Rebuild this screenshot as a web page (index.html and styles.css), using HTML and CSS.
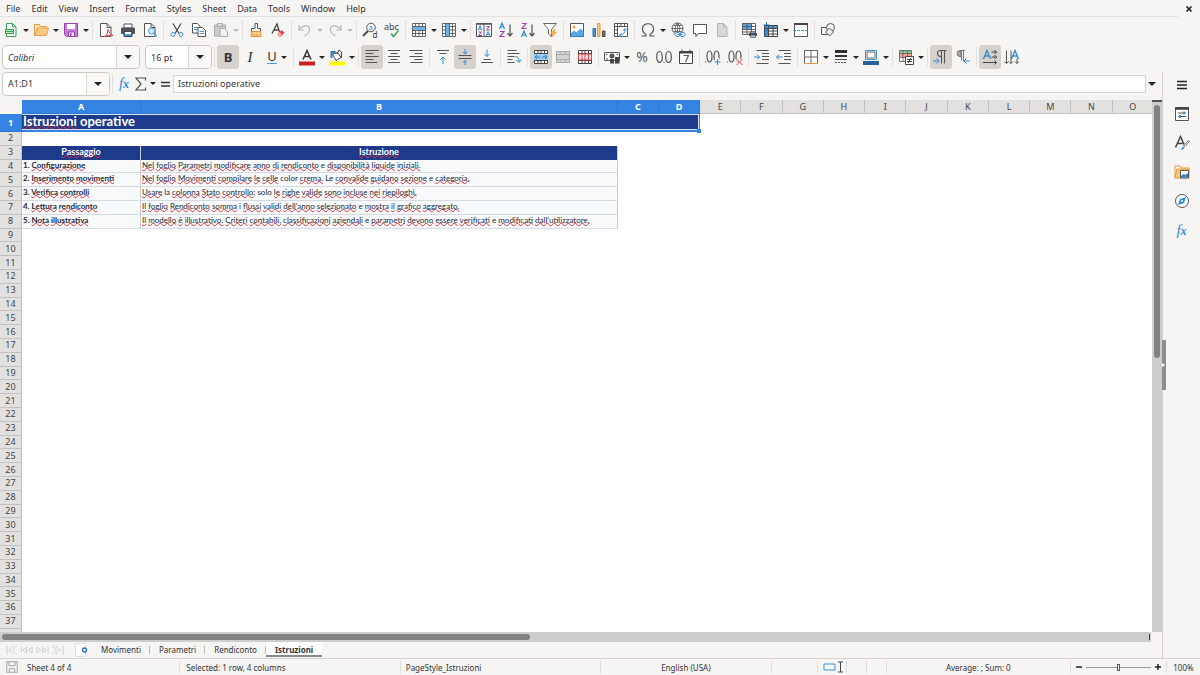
FILE: index.html
```html
<!DOCTYPE html>
<html lang="it">
<head>
<meta charset="utf-8">
<title>Istruzioni operative</title>
<link rel="stylesheet" href="styles.css">
</head>
<body>
<div class="app">
<nav class="menubar">
<div class="menus"><button>File</button><button>Edit</button><button>View</button><button>Insert</button><button>Format</button><button>Styles</button><button>Sheet</button><button>Data</button><button>Tools</button><button>Window</button><button>Help</button></div>
<button class="close" aria-label="Close document"><svg class="i8" viewBox="0 0 8 8"><path d="M1.500 1.500l5 5M6.500 1.500l-5 5" stroke="#222" stroke-width="1.700"/></svg></button>
</nav>

<div class="toolbar standard">
<button aria-label="New"><svg viewBox="0 0 16 16"><path d="M3.500 1.500h6l3.500 3.500v9.500h-9.500z" fill="#fff" stroke="#3d9c5c"/><path d="M9.500 1.500v3.500h3.500" stroke="#3d9c5c"/><path d="M2 7h9v5h-9z" fill="#3aa655"/><path d="M3 8.500h7M3 10.500h7" stroke="#bfe5c8"/></svg><i></i></button>
<button aria-label="Open"><svg viewBox="0 0 16 16"><path d="M1.500 13.500v-11h5l1 2h6v2" stroke="#e09a4a" fill="#fbe3bd"/><path d="M1.500 13.500l3-7.500h11l-2 7.500z" fill="#f9c97f" stroke="#e8a04c"/></svg><i></i></button>
<button aria-label="Save"><svg viewBox="0 0 16 16"><path d="M1.500 1.500h13v13h-11l-2-2z" fill="#c77fd6" stroke="#9a3fae"/><path d="M4 2h8v5h-8z" fill="#fff"/><path d="M5.500 10h6v4.500h-6z" fill="#fff" stroke="#9a3fae"/><path d="M7 11h1.500v3h-1.500z" fill="#9a3fae"/></svg><i></i></button>
<span class="sep"></span>
<button aria-label="Export as PDF"><svg viewBox="0 0 16 16"><path d="M2.500 1.500h6.500l4 4v9h-10.500z" fill="#fff" stroke="#555"/><path d="M9 1.500v4h4" stroke="#555"/><path d="M6.500 14.500q4-3 3.500-7q1 5 5 6q-5-1-8.500 1z" fill="#fff" stroke="#e0404a"/></svg></button>
<button aria-label="Print"><svg viewBox="0 0 16 16"><path d="M4 2h8v4h-8z" fill="#fff" stroke="#555"/><rect x="1" y="5.500" width="14" height="6.500" rx="1" fill="#4d5359"/><path d="M4 9.500h8v5h-8z" fill="#4a9ae0" stroke="#444"/><path d="M5 10h6v2h-6z" fill="#fff"/></svg></button>
<button aria-label="Print preview"><svg viewBox="0 0 16 16"><path d="M2.500 1.500h6.500l4 4v9h-10.500z" fill="#fff" stroke="#555"/><path d="M9 1.500v4h4" stroke="#555"/><circle cx="9.500" cy="9" r="3" fill="#d9ecfb" stroke="#4a9ad8"/><path d="M11.700 11.200l3 3.300" stroke="#4a9ad8" stroke-width="1.400"/></svg></button>
<span class="sep"></span>
<button aria-label="Cut"><svg viewBox="0 0 16 16"><path d="M4 1.500l6 10M12 1.500l-6 10" stroke="#444" stroke-width="1.200"/><circle cx="4" cy="12.500" r="2" stroke="#3d92d6"/><circle cx="12" cy="12.500" r="2" stroke="#3d92d6"/></svg></button>
<button aria-label="Copy"><svg viewBox="0 0 16 16"><path d="M1.500 1.500h5l2.500 2.500v7h-7.500z" fill="#fff" stroke="#555"/><path d="M3 5.500h4M3 7.500h4" stroke="#4a9ad8"/><path d="M7 5.500h4.500l3 3v6h-7.500z" fill="#fff" stroke="#555"/><path d="M8.500 9.500h4.500M8.500 11.500h4.500" stroke="#4a9ad8"/></svg></button>
<button aria-label="Paste" disabled><svg viewBox="0 0 16 16"><path d="M1.500 3h11v11h-11z" fill="#ccc" stroke="#aaa"/><path d="M4.500 1.500h5v3h-5z" fill="#ddd" stroke="#aaa"/><path d="M7 6.500h4.500l3 3v5h-7.500z" fill="#f2f2f2" stroke="#aaa"/></svg><i></i></button>
<span class="sep"></span>
<button aria-label="Clone formatting"><svg viewBox="0 0 16 16"><path d="M7 6.500v-5h2.500v5h3v3h-9v-3z" fill="#fff" stroke="#555"/><path d="M3.500 9.500h9l.5 5h-10z" fill="#f9c97f" stroke="#e8943a"/><path d="M6 14v-2M9 14v-2" stroke="#e8943a"/></svg></button>
<button aria-label="Clear formatting"><svg viewBox="0 0 16 16"><path d="M2 11.500l5-9.500 2.500 8M4 8h5" stroke="#444" stroke-width="1.300"/><path d="M7.500 12l4-4 3 2.500-3.500 4h-2z" fill="#e0404a"/><path d="M7.500 12l2-2 2.500 3-1.500 1.500h-1.500z" fill="#f5a5aa"/></svg></button>
<span class="sep"></span>
<button aria-label="Undo" disabled><svg viewBox="0 0 16 16"><path d="M2 3v5h5M2.500 7.500c4-6 11-4 10 1q-.5 3-5 5.500" stroke="#b5b5b5" stroke-width="1.200"/></svg><i></i></button>
<button aria-label="Redo" disabled><svg viewBox="0 0 16 16"><path d="M14 3v5h-5M13.500 7.500c-4-6-11-4-10 1q.5 3 5 5.500" stroke="#b5b5b5" stroke-width="1.200"/></svg><i></i></button>
<span class="sep"></span>
<button aria-label="Find and replace"><svg viewBox="0 0 16 16"><circle cx="9" cy="5.500" r="4.300" fill="#fff" stroke="#555"/><path d="M6 9l-5 5" stroke="#444" stroke-width="1.800"/><text x="6.800" y="8" font-size="7" fill="#2f8ad4">a</text><text x="10.500" y="15.500" font-size="8" fill="#333">d</text></svg></button>
<button aria-label="Spelling"><svg viewBox="0 0 16 16"><text x="0" y="7.500" font-size="9" fill="#444">abc</text><path d="M7 11.500l2.500 3 5-6" stroke="#3aa655" stroke-width="1.500"/></svg></button>
<span class="sep"></span>
<button aria-label="Row"><svg viewBox="0 0 16 16"><path d="M1.500 1.500h13v13h-13z" fill="#fff"/><path d="M1.500 4.500h13v4h-13z" fill="#6bb3ec"/><path d="M1.500 1.500h13v13h-13zM1.500 4.500h13M1.500 8.500h13M1.500 11.500h13M4.500 1.500v3M4.500 8.500v6M8 1.500v3M8 8.500v6M11.500 1.500v3M11.500 8.500v6" stroke="#555" stroke-width=".9"/></svg><i></i></button>
<button aria-label="Column"><svg viewBox="0 0 16 16"><path d="M1.500 1.500h13v13h-13z" fill="#fff"/><path d="M4.500 1.500h4v13h-4z" fill="#6bb3ec"/><path d="M1.500 1.500h13v13h-13zM4.500 1.500v13M8.500 1.500v13M11.500 1.500v13M1.500 4.500h3M8.500 4.500h6M1.500 8h3M8.500 8h6M1.500 11.500h3M8.500 11.500h6" stroke="#555" stroke-width=".9"/></svg><i></i></button>
<span class="sep"></span>
<button aria-label="Sort"><svg viewBox="0 0 16 16"><path d="M.5 1.500h15v13h-15zM8 1.500v13" fill="#fff" stroke="#555"/><path d="M.5 2h15" stroke="#555" stroke-width="1.500"/><path d="M2 8.500l2-5 2 5M3 7h2M10 14l2-4.500 2 4.500M11 12.500h2" stroke="#2f8ad4"/><path d="M2.500 10h3l-3 3.500h3.500M10.500 4.500h3l-3 3.500h3.500" stroke="#9a3fae"/></svg></button>
<button aria-label="Sort ascending"><svg viewBox="0 0 16 16"><path d="M1.500 7l2.500-6 2.500 6M2.500 5h3" stroke="#2f8ad4" stroke-width="1.200"/><path d="M2 9.500h4l-4 5h4.500" stroke="#9a3fae" stroke-width="1.200"/><path d="M12 2.500v11.500M9.500 11l2.500 3 2.500-3" stroke="#555" stroke-width="1.200"/></svg></button>
<button aria-label="Sort descending"><svg viewBox="0 0 16 16"><path d="M1.500 15l2.500-6 2.500 6M2.500 13h3" stroke="#2f8ad4" stroke-width="1.200"/><path d="M2 1.500h4l-4 5h4.500" stroke="#9a3fae" stroke-width="1.200"/><path d="M12 2.500v11.500M9.500 11l2.500 3 2.500-3" stroke="#555" stroke-width="1.200"/></svg></button>
<button aria-label="AutoFilter"><svg viewBox="0 0 16 16"><path d="M1.500 1.500h13l-5 6v7l-3-2.500v-4.500z" fill="#fff" stroke="#666"/><path d="M12 7.500l-3.500 4h2.500l-1 3.500 4.500-5h-2.500l1-2.500z" fill="#f9b64f" stroke="#e8943a" stroke-width=".6"/></svg></button>
<span class="sep"></span>
<button aria-label="Insert image"><svg viewBox="0 0 16 16"><path d="M1.500 1.500h13v13h-13z" fill="#fff" stroke="#555"/><circle cx="5" cy="5" r="1.500" fill="#f6a13a"/><path d="M2 12l3-3 2.500 2 4-4 3 3v4.500h-12.500z" fill="#5aa9e6" stroke="#2f7fc4" stroke-width=".7"/></svg></button>
<button aria-label="Insert chart"><svg viewBox="0 0 16 16"><path d="M2 6.500h2.500v8h-2.500z" fill="#4a9ae0" stroke="#2a6fb0"/><path d="M6.500 1.500h2.500v13h-2.500z" fill="#f9c97f" stroke="#e8943a"/><path d="M11.500 9h2.500v5.500h-2.500z" fill="#777" stroke="#444"/></svg></button>
<button aria-label="Insert pivot table"><svg viewBox="0 0 16 16"><path d="M1.500 1.500h13v13h-13zM4.500 1.500v13M1.500 4.500h13M8 1.500v3M11.500 1.500v3M1.500 8h3M1.500 11.500h3" fill="#fff" stroke="#555"/><path d="M7 13q5 0 5-6M10 8.500l2-2 2 2M8.500 11l-2 2 2 2" stroke="#2f8ad4"/></svg></button>
<span class="sep"></span>
<button aria-label="Special character"><svg viewBox="0 0 16 16"><path d="M1.500 14h4.500v-1.500q-3.500-2-3.500-5.500c0-7 11-7 11 0q0 3.500-3.500 5.500v1.500h4.500" stroke="#555" stroke-width="1.200"/></svg><i></i></button>
<button aria-label="Insert hyperlink"><svg viewBox="0 0 16 16"><circle cx="7.500" cy="6.500" r="5.500" stroke="#555"/><path d="M2 6.500h11M7.500 1v10M3.500 3.500h8M3.500 9.500h8M7.500 1q-5 5.500 0 11M7.500 1q5 5.500 0 11" stroke="#555" stroke-width=".8"/><rect x="5" y="10.500" width="5" height="4" rx="2" fill="#fff" stroke="#3d92d6"/><rect x="10" y="10.500" width="5" height="4" rx="2" fill="#fff" stroke="#3d92d6"/><path d="M7.500 12.500h5" stroke="#3d92d6"/></svg></button>
<button aria-label="Insert comment"><svg viewBox="0 0 16 16"><path d="M1.500 2.500h13v9h-8l-2.500 3v-3h-2.500z" fill="#fff" stroke="#555"/></svg></button>
<button aria-label="Headers and footers" disabled><svg viewBox="0 0 16 16"><path d="M3.500 1.500h6l3.500 3.500v9.500h-9.500z" fill="#d8d8d8" stroke="#b5b5b5"/><path d="M9.500 1.500v3.500h3.500" stroke="#b5b5b5"/></svg></button>
<span class="sep"></span>
<button aria-label="Define print area"><svg viewBox="0 0 16 16"><path d="M1.500 1.500h13v11h-13z" fill="#fff"/><path d="M1.500 1.500h9v6h-9z" fill="#5aa9e6"/><path d="M1.500 1.500h13v11h-13zM1.500 4.500h13M1.500 7.500h13M1.500 10h13M6 1.500v11M10.500 1.500v11" stroke="#555" stroke-width=".9"/><path d="M8 11h8v3h-8z" fill="#4d5359"/><path d="M9.500 9.500h5v1.500h-5zM9.500 13h5v2.500h-5z" fill="#9dcaf0" stroke="#444" stroke-width=".6"/></svg></button>
<button aria-label="Freeze rows and columns"><svg viewBox="0 0 16 16"><path d="M1.500 3.500h13v11h-13z" fill="#fff"/><path d="M1.500 3.500h13v3h-13zM1.500 3.500h4v11h-4z" fill="#4a9ae0"/><path d="M1.500 3.500h13v11h-13zM5.500 3.500v11M10 3.500v11M1.500 6.500h13M5.500 9h9M5.500 12h9" stroke="#444"/><path d="M3.500 0v5M.5 3h6M1.500 10l4-3M1.500 14l4-4" stroke="#1c67ae" stroke-width=".9"/></svg><i></i></button>
<button aria-label="Split window"><svg viewBox="0 0 16 16"><path d="M1.500 1.500h13v13h-13z" fill="#fff" stroke="#555"/><path d="M1 2h14" stroke="#444" stroke-width="2"/><path d="M0 8.500h16" stroke="#3d92d6" stroke-dasharray="3 1"/></svg></button>
<span class="sep"></span>
<button aria-label="Show draw functions"><svg viewBox="0 0 16 16"><path d="M1.500 5.500h7v7h-7z" stroke="#555" fill="#f6f5f4"/><circle cx="10.500" cy="5.500" r="4" stroke="#555" fill="#f6f5f4"/><path d="M9.500 6l4 4-4 4-4-4z" stroke="#555" fill="#f6f5f4"/></svg></button>
</div>

<div class="toolbar formatting">
<div class="combo fontname"><input value="Calibri" aria-label="Font name"><button aria-label="Font list"><i></i></button></div>
<div class="combo fontsize"><input value="16 pt" aria-label="Font size"><button aria-label="Size list"><i></i></button></div>
<span class="sep"></span>
<button class="on glyph bold" aria-label="Bold">B</button>
<button class="glyph italic" aria-label="Italic">I</button>
<button class="glyph under" aria-label="Underline"><span>U</span><i></i></button>
<span class="sep"></span>
<button aria-label="Font color"><svg viewBox="0 0 16 16"><path d="M4 10.500l4-9 4 9M5.500 7.500h5" stroke="#333" stroke-width="1.500"/><path d="M0 12.500h16v4h-16z" fill="#c9211e"/></svg><i></i></button>
<button aria-label="Background color"><svg viewBox="0 0 16 16"><path d="M3.500 5l5-1.500 3.500 5-5 3z" fill="#fff" stroke="#444"/><path d="M2.500 9v-6h4" stroke="#2f7fc4" stroke-width="2"/><path d="M8 5l2-4 2.500 2v6" stroke="#444"/><path d="M0 12.500h16v4h-16z" fill="#ff0"/></svg><i></i></button>
<span class="sep"></span>
<button class="on" aria-label="Align left"><svg viewBox="0 0 16 16"><path d="M1.500 1.500h13M1.500 4.500h8M1.500 7.500h13M1.500 10.500h8M1.500 13.500h12" stroke="#555" stroke-width="1.100"/></svg></button>
<button aria-label="Center horizontally"><svg viewBox="0 0 16 16"><path d="M2 1.500h12M4.500 4.500h7M2 7.500h12M4.500 10.500h7M2 13.500h12" stroke="#555" stroke-width="1.100"/></svg></button>
<button aria-label="Align right"><svg viewBox="0 0 16 16"><path d="M1.500 1.500h13M6.500 4.500h8M1.500 7.500h13M6.500 10.500h8M2.500 13.500h12" stroke="#555" stroke-width="1.100"/></svg></button>
<span class="sep"></span>
<button aria-label="Align top"><svg viewBox="0 0 16 16"><path d="M2 1.500h12M4.500 4.500h7" stroke="#555"/><path d="M8 15v-7M5.500 10.500l2.500-2.500 2.500 2.500" stroke="#2f8ad4"/></svg></button>
<button class="on" aria-label="Center vertically"><svg viewBox="0 0 16 16"><path d="M1.500 6.500h13M1.500 9.500h13" stroke="#555"/><path d="M8 0v5M6 3l2 2 2-2M8 16v-4.500M6 13.500l2-2 2 2" stroke="#2f8ad4"/></svg></button>
<button aria-label="Align bottom"><svg viewBox="0 0 16 16"><path d="M4.500 10.500h7M2 13.500h12" stroke="#555"/><path d="M8 .5v7M5.500 5l2.500 2.500 2.500-2.500" stroke="#2f8ad4"/></svg></button>
<span class="sep"></span>
<button aria-label="Wrap text"><svg viewBox="0 0 16 16"><path d="M1.500 1.500h9M1.500 4.500h12M1.500 7.500h7M1.500 10.500h5M1.500 13.500h7" stroke="#555"/><path d="M9 7.500q4 0 4 5M10.500 11l2.500 2.500 2-3" stroke="#2f8ad4"/></svg></button>
<span class="sep"></span>
<button class="on" aria-label="Merge and center cells"><svg viewBox="0 0 16 16"><path d="M1.500 1.500h13v13h-13z" fill="#fff"/><path d="M1.500 1.500h13v13h-13zM1.500 4.500h13M1.500 11.500h13M5 1.500v3M8 1.500v3M11.500 1.500v3M5 11.500v3M8 11.500v3M11.500 11.500v3" stroke="#444"/><path d="M1 5h14v6h-14z" fill="#9dcaf0"/><path d="M2 8h5M9 8h5M4 6l-2 2 2 2M12 6l2 2-2 2" stroke="#2f7fc4"/></svg></button>
<button aria-label="Merge cells" disabled><svg viewBox="0 0 16 16"><path d="M1.500 2.500h13v11h-13zM1.500 5.500h13M1.500 10.500h13M6 2.500v3M10.500 2.500v3M6 10.500v3M10.500 10.500v3" fill="#d5d5d5" stroke="#aaa"/></svg></button>
<button aria-label="Unmerge cells"><svg viewBox="0 0 16 16"><path d="M1.500 1.500h13v13h-13zM1.500 4.500h13M1.500 11.500h13M5 1.500v3M8 1.500v3M11.500 1.500v3M5 11.500v3M8 11.500v3M11.500 11.500v3" fill="#fff" stroke="#444"/><path d="M1.500 5h13v6h-13zM5 5v6M8 5v6M11.500 5v6" fill="#fbe9e9" stroke="#d8404a"/></svg></button>
<span class="sep"></span>
<button aria-label="Format as currency"><svg viewBox="0 0 16 16"><path d="M.5 3.500h15v8h-15z" fill="#fff" stroke="#555"/><circle cx="8" cy="7" r="2.500" fill="#555"/><path d="M2 5.500h1.500M12.500 5.500h1.500M2 10h2" stroke="#555"/><path d="M6 10h4v4.500h-4zM11 8h4.500v6.500h-4.500z" fill="#444"/></svg><i></i></button>
<button class="glyph num" aria-label="Format as percent">%</button>
<button class="glyph num" aria-label="Format as number"><svg viewBox="0 0 16 16"><ellipse cx="3.500" cy="8" rx="2.800" ry="5.500" stroke="#555" stroke-width="1.200"/><ellipse cx="12.500" cy="8" rx="2.800" ry="5.500" stroke="#555" stroke-width="1.200"/><path d="M7.500 13.500h1.200" stroke="#555"/></svg></button>
<button aria-label="Format as date"><svg viewBox="0 0 16 16"><path d="M1.500 2.500h13v12h-13zM4 .5v3M12 .5v3" fill="#fff" stroke="#444"/><path d="M1 3.500h14" stroke="#444" stroke-width="2"/><path d="M5.500 6.500h5l-3 6.500" stroke="#555" stroke-width="1.200"/></svg></button>
<span class="sep"></span>
<button aria-label="Add decimal place"><svg viewBox="0 0 16 16"><ellipse cx="4.500" cy="7.500" rx="2.500" ry="5.500" stroke="#555" stroke-width="1.200"/><ellipse cx="11.500" cy="7.500" rx="2.500" ry="5.500" stroke="#555" stroke-width="1.200"/><path d="M0 13h1.200" stroke="#555"/><path d="M12.500 9v7M9 12.500h7" stroke="#f6f5f4" stroke-width="3"/><path d="M12.500 10v6M9.500 13h6" stroke="#2f8ad4"/></svg></button>
<button aria-label="Delete decimal place"><svg viewBox="0 0 16 16"><ellipse cx="4.500" cy="7.500" rx="2.500" ry="5.500" stroke="#555" stroke-width="1.200"/><ellipse cx="11.500" cy="7.500" rx="2.500" ry="5.500" stroke="#555" stroke-width="1.200"/><path d="M0 13h1.200" stroke="#555"/><path d="M9.500 10l6 6M15.500 10l-6 6" stroke="#f6f5f4" stroke-width="2.500"/><path d="M9.500 10l6 6M15.500 10l-6 6" stroke="#e0404a"/></svg></button>
<span class="sep"></span>
<button aria-label="Increase indent"><svg viewBox="0 0 16 16"><path d="M2.500 1.500h12M8 4.500h7M8 7.500h7M8 10.500h7M2.500 14.500h12" stroke="#555"/><path d="M0 8h5.500M3 5.500l2.500 2.500-2.500 2.500" stroke="#2f8ad4"/></svg></button>
<button aria-label="Decrease indent"><svg viewBox="0 0 16 16"><path d="M2.500 1.500h12M8 4.500h7M8 7.500h7M8 10.500h7M2.500 14.500h12" stroke="#555"/><path d="M.5 8h6M3 5.500l-2.500 2.500 2.500 2.500" stroke="#2f8ad4"/></svg></button>
<span class="sep"></span>
<button aria-label="Borders"><svg viewBox="0 0 16 16"><path d="M1.500 1.500h13v13h-13z" fill="#fff"/><path d="M1.500 14.500v-13h13v13M8 1.500v13M1.500 8h13" stroke="#666"/><path d="M1.500 14.500h13" stroke="#e8943a"/></svg><i></i></button>
<button aria-label="Border style"><svg viewBox="0 0 16 16"><path d="M2 2.500h12" stroke="#333" stroke-width="3"/><path d="M2 7h12" stroke="#333" stroke-width="2"/><path d="M2 10.500h12" stroke="#555"/><path d="M2 13.500h12" stroke="#555" stroke-dasharray="2 1"/></svg><i></i></button>
<button aria-label="Border color"><svg viewBox="0 0 16 16"><path d="M2.500 1.500h11v9h-11z" stroke="#3d92d6" fill="#fff"/><path d="M4 3h8v6h-8z" stroke="#666"/><path d="M0 12h16v4h-16z" fill="#2a6099"/></svg><i></i></button>
<span class="sep"></span>
<button aria-label="Conditional formatting"><svg viewBox="0 0 16 16"><path d="M1.500 1.500h12v11h-12z" fill="#fff"/><path d="M1.500 1.500h12v3h-12z" fill="#7fd08a"/><path d="M1.500 4.500h12v4h-12z" fill="#f5a097"/><path d="M1.500 1.500h12v11h-12zM1.500 4.500h12M1.500 8.500h12M5 1.500v11M9.500 1.500v11" stroke="#666" stroke-width=".9"/><path d="M7.500 7.500h8v8h-8z" fill="#fff" stroke="#444"/><path d="M9 10.500h5M9 12.500h5M13 9l-3 5" stroke="#444"/></svg><i></i></button>
<span class="sep"></span>
<button class="on" aria-label="Left-to-right"><svg viewBox="0 0 16 16"><path d="M13.500 1.500h-6q-3 0-3 3t3.500 3M8.500 1.500v13M11.500 1.500v13" stroke="#555" stroke-width="1.100"/><path d="M0 12h6M3.500 9.500l2.500 2.500-2.500 2.500" stroke="#2f8ad4"/></svg></button>
<button aria-label="Right-to-left"><svg viewBox="0 0 16 16"><path d="M10 1.500h-5q-3 0-3 3t3 3h1v-6M6.500 1.500v10M8.500 1.500v11" stroke="#777" fill="#aaa"/><path d="M9 12h6M11.500 9.500l-2.500 2.500 2.500 2.500" stroke="#2f8ad4"/></svg></button>
<span class="sep"></span>
<button class="on" aria-label="Text direction left to right"><svg viewBox="0 0 16 16"><path d="M1.500 10l3.500-8.500 3.500 8.500M3 7h4" stroke="#2f8ad4" stroke-width="1.300"/><path d="M9.500 3h5M9.500 8h5M1 13.500h13.500M12.500 1l2 2-2 2M12.500 6l2 2-2 2M12.500 11.500l2 2-2 2" stroke="#444"/></svg></button>
<button aria-label="Text direction top to bottom"><svg viewBox="0 0 16 16"><path d="M7.500 10l3.500-8.500 3.500 8.500M9 7h4" stroke="#2f8ad4" stroke-width="1.300"/><path d="M2.500 1.500v13M7 1.500v13M13 9.500v5M.5 12.500l2 2 2-2M5 12.500l2 2 2-2M11 12.500l2 2 2-2" stroke="#555"/></svg></button>
</div>

<div class="workspace">
<main class="doc">
<div class="formulabar">
<div class="combo namebox"><input value="A1:D1" aria-label="Name box"><button aria-label="Name list"><i></i></button></div>
<span class="sep"></span>
<button class="fx" aria-label="Function wizard">f<span>x</span></button>
<button class="sum" aria-label="Select function"><svg viewBox="0 0 16 16"><path d="M12.500 4.500v-2.500h-9.500l5 6-5 6h9.500v-2.500" stroke="#555" stroke-width="1.200"/></svg><i></i></button>
<button class="eq" aria-label="Formula"><svg viewBox="0 0 16 16"><path d="M4 6.500h9M4 10h9" stroke="#333" stroke-width="1.500"/></svg></button>
<input class="formula" value="Istruzioni operative" aria-label="Formula input">
<button class="expand" aria-label="Expand formula bar"><i></i></button>
</div>

<div class="sheet">
<div class="cells">
<table>
<colgroup><col class="c-row"><col class="c-a"><col class="c-b"><col class="c-n"><col class="c-n"><col><col><col><col><col><col><col><col><col><col><col></colgroup>
<thead><tr><th></th><th class="sel">A</th><th class="sel">B</th><th class="sel">C</th><th class="sel">D</th><th>E</th><th>F</th><th>G</th><th>H</th><th>I</th><th>J</th><th>K</th><th>L</th><th>M</th><th>N</th><th>O</th></tr></thead>
<tbody>
<tr class="title"><th class="sel">1</th><td colspan="4" class="banner"><span>Istruzioni</span> operative</td><td colspan="11"></td></tr>
<tr><th>2</th><td colspan="15"></td></tr>
<tr class="head"><th>3</th><td><span>Passaggio</span></td><td><span>Istruzione</span></td><td colspan="13"></td></tr>
<tr class="item"><th>4</th><td>1. <span>Configurazione</span></td><td><span>Nel</span> <span>foglio</span> <span>Parametri</span> <span>modificare</span> <span>anno</span> <span>di</span> <span>rendiconto</span> e <span>disponibilità</span> <span>liquide</span> <span>iniziali.</span></td><td colspan="13"></td></tr>
<tr class="item"><th>5</th><td>2. <span>Inserimento</span> <span>movimenti</span></td><td><span>Nel</span> <span>foglio</span> <span>Movimenti</span> <span>compilare</span> <span>le</span> <span>celle</span> color <span>crema.</span> Le <span>convalide</span> <span>guidano</span> <span>sezione</span> e <span>categoria.</span></td><td colspan="13"></td></tr>
<tr class="item"><th>6</th><td>3. <span>Verifica</span> <span>controlli</span></td><td><span>Usare</span> la <span>colonna</span> <span>Stato</span> <span>controllo</span>: solo <span>le</span> <span>righe</span> <span>valide</span> <span>sono</span> <span>incluse</span> <span>nei</span> <span>riepiloghi.</span></td><td colspan="13"></td></tr>
<tr class="item"><th>7</th><td>4. <span>Lettura</span> <span>rendiconto</span></td><td><span>Il</span> <span>foglio</span> <span>Rendiconto</span> <span>somma</span> i <span>flussi</span> <span>validi</span> <span>dell'anno</span> <span>selezionato</span> e <span>mostra</span> <span>il</span> <span>grafico</span> <span>aggregato.</span></td><td colspan="13"></td></tr>
<tr class="item"><th>8</th><td>5. <span>Nota</span> <span>illustrativa</span></td><td><span>Il</span> <span>modello</span> <span>è</span> <span>illustrativo.</span> <span>Criteri</span> <span>contabili,</span> <span>classificazioni</span> <span>aziendali</span> e <span>parametri</span> <span>devono</span> <span>essere</span> <span>verificati</span> e <span>modificati</span> <span>dall'utilizzatore.</span></td><td colspan="13"></td></tr>
<tr><th>9</th><td colspan="15"></td></tr>
<tr><th>10</th><td colspan="15"></td></tr>
<tr><th>11</th><td colspan="15"></td></tr>
<tr><th>12</th><td colspan="15"></td></tr>
<tr><th>13</th><td colspan="15"></td></tr>
<tr><th>14</th><td colspan="15"></td></tr>
<tr><th>15</th><td colspan="15"></td></tr>
<tr><th>16</th><td colspan="15"></td></tr>
<tr><th>17</th><td colspan="15"></td></tr>
<tr><th>18</th><td colspan="15"></td></tr>
<tr><th>19</th><td colspan="15"></td></tr>
<tr><th>20</th><td colspan="15"></td></tr>
<tr><th>21</th><td colspan="15"></td></tr>
<tr><th>22</th><td colspan="15"></td></tr>
<tr><th>23</th><td colspan="15"></td></tr>
<tr><th>24</th><td colspan="15"></td></tr>
<tr><th>25</th><td colspan="15"></td></tr>
<tr><th>26</th><td colspan="15"></td></tr>
<tr><th>27</th><td colspan="15"></td></tr>
<tr><th>28</th><td colspan="15"></td></tr>
<tr><th>29</th><td colspan="15"></td></tr>
<tr><th>30</th><td colspan="15"></td></tr>
<tr><th>31</th><td colspan="15"></td></tr>
<tr><th>32</th><td colspan="15"></td></tr>
<tr><th>33</th><td colspan="15"></td></tr>
<tr><th>34</th><td colspan="15"></td></tr>
<tr><th>35</th><td colspan="15"></td></tr>
<tr><th>36</th><td colspan="15"></td></tr>
<tr><th>37</th><td colspan="15"></td></tr>
<tr><th>&nbsp;</th><td colspan="15"></td></tr>
</tbody>
</table>
</div>
<div class="vscroll"><div class="thumb"></div></div>
</div>
<div class="hscroll"><div class="thumb"></div><div class="grip"></div></div>
<div class="tabs">
<div class="nav">
<button aria-label="First sheet"><svg viewBox="0 0 16 12"><path d="M2 1v10M13 1l-5 5 5 5M9 1l-5 5 5 5" stroke="#ccc"/></svg></button>
<button aria-label="Previous sheet"><svg viewBox="0 0 16 12"><path d="M1.500 3v6M7 3l-4 3 4 3zM13 3l-4 3 4 3z" stroke="#ccc"/></svg></button>
<button aria-label="Next sheet"><svg viewBox="0 0 16 12"><path d="M2 3l4 3-4 3zM8 3l4 3-4 3zM14 3v6" stroke="#ccc"/></svg></button>
<button aria-label="Last sheet"><svg viewBox="0 0 16 12"><path d="M2 1l5 5-5 5M6 1l5 5-5 5M14 1v10" stroke="#ccc"/></svg></button>
</div>
<button class="add" aria-label="Add sheet"><svg viewBox="0 0 12 14"><path d="M.5 .5h10v13h-10z" fill="#fff" stroke="#e2e2e2"/><circle cx="9.500" cy="7" r="2" stroke="#2a6fc0" stroke-width="1.300" fill="#fff"/></svg></button>
<button class="tab">Movimenti</button><button class="tab">Parametri</button><button class="tab">Rendiconto</button><button class="tab active">Istruzioni</button>
</div>
</main>
<aside class="sidebar">
<button aria-label="Sidebar settings"><svg viewBox="0 0 16 16"><path d="M3 4.500h10M3 8h10M3 11.500h10" stroke="#222" stroke-width="1.400"/></svg></button>
<button aria-label="Properties"><svg viewBox="0 0 16 16"><path d="M1.500 1.500h13v13h-13z" fill="#fff" stroke="#555"/><path d="M1 2.500h14" stroke="#444" stroke-width="2.500"/><path d="M4 7h8M4 10.500h8" stroke="#555"/><path d="M10 5.500v3M6 9v3" stroke="#2f8ad4" stroke-width="1.500"/></svg></button>
<button aria-label="Styles"><svg viewBox="0 0 16 16"><path d="M1.500 12.500l5-11 3.500 8M3.500 8.500h5" stroke="#444" stroke-width="1.500"/><path d="M15.500 6l-4.500 5.500-1.500-1 5-5z" fill="#fff" stroke="#555" stroke-width=".8"/><path d="M5 15q3 0 3.500-3.500l2 .5q0 3.500-5.500 3z" fill="#3d92d6"/></svg></button>
<button aria-label="Gallery"><svg viewBox="0 0 16 16"><path d="M1 14v-12h5l1 2h8v2" fill="#fff" stroke="#e8943a"/><path d="M1 14l2-9h12v9z" fill="#f9c97f" stroke="#e8943a"/><path d="M6.500 6.500h8v7.500h-8z" fill="#fff" stroke="#555"/><path d="M7 12l2.500-2 2 1 2.500-2v4.500h-7z" fill="#2f7fc4"/></svg></button>
<button aria-label="Navigator"><svg viewBox="0 0 16 16"><circle cx="8" cy="8" r="6.500" fill="#fff" stroke="#555"/><path d="M12 4l-2 6-6 2 2-6z" fill="#2f8ad4"/><circle cx="8" cy="8" r="1" fill="#fff"/></svg></button>
<button class="fx" aria-label="Functions">f<span>x</span></button>
<div class="handle"></div>
</aside>
</div>

<footer class="status">
<span class="st-save"><svg viewBox="0 0 16 16"><path d="M2 2h12v12h-12zM4.500 2v4.500h7v-4.500M5 14v-4h6v4" stroke="#999"/></svg></span>
<span class="st-sheet">Sheet 4 of 4</span>
<span class="st-sel">Selected: 1 row, 4 columns</span>
<span class="st-page">PageStyle_Istruzioni</span>
<span class="st-lang">English (USA)</span>
<span class="st-ins"></span>
<span class="st-mode"><svg viewBox="0 0 20 12"><path d="M1 3h11v6h-11z" stroke="#3d92d6"/><path d="M15 1h5M17.500 1v10M15 11h5" stroke="#444"/></svg></span>
<span class="st-a"></span>
<span class="st-a"></span>
<span class="st-avg">Average: ; Sum: 0</span>
<span class="st-zoom"><button aria-label="Zoom out"><svg class="i8" viewBox="0 0 8 8"><path d="M1 4h6" stroke="#222" stroke-width="1.500"/></svg></button><input type="range" min="0" max="100" value="50" aria-label="Zoom"><button aria-label="Zoom in"><svg class="i8" viewBox="0 0 8 8"><path d="M1 4h6M4 1v6" stroke="#222" stroke-width="1.500"/></svg></button></span>
<span class="st-pct">100%</span>
</footer>
</div>
</body>
</html>
```
FILE: styles.css
```css
* { box-sizing: border-box; }
body { margin: 0; background: #f6f5f4; color: #333; font-family: "Noto Sans", sans-serif; font-size: 9px; }
button, input { font: inherit; color: inherit; margin: 0; padding: 0; border: 0; background: none; }
svg { display: block; width: 16px; height: 16px; fill: none; flex: none; overflow: visible; font-family: "Noto Sans", sans-serif; }
svg.i8 { width: 8px; height: 8px; }
i { display: block; flex: none; width: 0; height: 0; border: 3px solid transparent; border-top-color: #222; border-bottom: 0; }
.app { display: flex; flex-direction: column; height: 100vh; overflow: hidden; }

.menubar { display: flex; justify-content: space-between; align-items: center; height: 17px; }
.menus { display: flex; gap: 1px; flex: 1; height: 17px; padding-left: 1px; border-bottom: 1px solid #e4e2e0; }
.menus button { padding: 0 5px; }
.close { width: 22px; display: flex; justify-content: center; }

.toolbar { display: flex; align-items: center; }
.standard { height: 26px; }
.formatting { height: 28px; padding-left: 2px; }
.toolbar > button { display: flex; align-items: center; height: 24px; padding: 0 3px; border-radius: 3px; flex: none; }
.toolbar > button i { margin-left: 4px; margin-right: -2px; }
.toolbar > button:disabled i { border-top-color: #bbb; }
.toolbar > button.on { background: #d5d1cd; }
.sep { width: 1px; height: 20px; margin: 0 2px; background: #e3e1df; flex: none; }
.toolbar > .glyph { width: 22px; justify-content: center; font-size: 13px; line-height: 20px; }
.toolbar > .bold { font-weight: 700; }
.toolbar > .italic { font-family: "Liberation Serif", serif; font-style: italic; font-size: 15px; }
.toolbar > .under { width: 30px; }
.under span { border-bottom: 1px solid #4a9ae0; line-height: 13px; }
.toolbar > .num { font-size: 14px; color: #555; padding: 0; }

.combo { display: flex; height: 24px; border: 1px solid #cdc7c2; border-radius: 4px; background: #fff; overflow: hidden; flex: none; }
.combo input { flex: 1; min-width: 0; padding-left: 5px; }
.combo button { width: 23px; display: flex; align-items: center; justify-content: center; border-left: 1px solid #dcd8d4; background: #f9f8f7; }
.combo i, .expand i { border-width: 4px 4px 0; }
.fontname { width: 138px; margin-right: 5px; }
.fontname input { font-style: italic; }
.fontsize { width: 67px; }

.workspace { display: flex; flex: 1; min-height: 0; }
.doc { display: flex; flex-direction: column; flex: 1; min-width: 0; }
.formulabar { display: flex; align-items: center; height: 29px; padding: 0 4px 4px 2px; }
.namebox { width: 108px; }
.fx { font-family: "Liberation Serif", serif; font-style: italic; font-size: 15px; line-height: 16px; color: #2f8ad4; width: 18px; }
.fx span { font-size: 12px; font-weight: 700; }
.sum { display: flex; align-items: center; width: 24px; }
.sum i { margin-left: 1px; }
.formula { flex: 1; min-width: 0; height: 18px; padding: 0 4px; border: 1px solid #d8d5d2; background: #fff; }
.expand { width: 12px; display: flex; justify-content: center; }

.sheet { display: flex; flex: 1; min-height: 0; }
.cells { flex: 1; min-width: 0; overflow: hidden; background: #fff; }
table { table-layout: fixed; border-collapse: separate; border-spacing: 0; width: calc(100% + 2px); height: calc(100% + 11px); }
.c-row { width: 22px; }
.c-a { width: 119px; }
.c-b { width: 477px; }
.c-n { width: 41px; }
th, td { padding: 0; line-height: 12px; overflow: hidden; white-space: nowrap; }
th { background: #e2e1e0; color: #444; font-weight: 400; font-size: 9px; border-right: 1px solid #c4c2c0; border-bottom: 1px solid #c4c2c0; }
thead tr { height: 14px; }
thead th:first-child { background: #f6f5f4; border-color: #f6f5f4; }
th.sel { background: #3584e4; color: #fff; font-weight: 700; border-color: #2f76cc; }
td { font-family: Lato, sans-serif; }
.title { height: 18px; }
.title .banner { position: relative; overflow: visible; background: #1e3a8a; color: #fff; font-size: 13px; font-weight: 700; line-height: 14px; padding-left: 1px; border: 1px solid #3584e4; border-width: 0 1px 2px 0; box-shadow: inset 0 1px #d8e4f6, inset -1px -1px #d8e4f6; vertical-align: top; }
.banner::after { content: ""; position: absolute; right: -2px; bottom: -3px; width: 4px; height: 4px; background: #3584e4; }
td span { text-decoration: underline wavy #e0303a 1px; text-decoration-skip-ink: none; text-underline-offset: -1px; }
.head td:nth-child(-n+3) { background: #1e3a8a; color: #fff; font-size: 9px; line-height: 11px; vertical-align: top; font-weight: 700; text-align: center; border-right: 1px solid #cbd5e1; }
.item td { font-size: 8px; color: #1f2937; line-height: 10px; vertical-align: top; }
.item td:nth-child(-n+3) { border-right: 1px solid #c5ccd4; border-bottom: 1px solid #d5dbe2; background: #f8fafc; }
.item td:nth-child(2) { font-weight: 700; padding-left: 1px; }
.item td:nth-child(3) { padding-left: 1px; }

.vscroll { width: 10px; background: #cdcdcd; border-top: 2px solid #555; padding: 3px 2px 0; }
.vscroll .thumb { height: 48%; border-radius: 3px; background: #7f827f; }
.hscroll { display: flex; height: 10px; margin-right: 11px; padding: 2px 1px 2px 2px; justify-content: space-between; background: #cdcdcd; flex: none; }
.hscroll .thumb { width: 46%; border-radius: 3px; background: #7f827f; }
.hscroll .grip { width: 1px; background: #444; }

.tabs { display: flex; height: 15px; margin-bottom: 1px; font-size: 8px; flex: none; }
.nav { display: flex; align-items: center; padding-left: 5px; }
.nav svg { width: 15px; height: 12px; }
.add { margin: 0 5px 0 10px; }
.add svg { width: 12px; height: 14px; }
.tab { padding: 0 9px; position: relative; }
.tab:not(.active)::after { content: ""; position: absolute; right: 0; top: 4px; height: 8px; border-right: 1px solid #bbb; }
.tab.active { background: #fff; font-weight: 700; box-shadow: inset 0 -2px #8a8a8a; }

.sidebar { position: relative; width: 38px; display: flex; flex-direction: column; align-items: center; gap: 13px; padding-top: 6px; border-left: 1px solid #d5d2cf; }
.sidebar .fx { width: 16px; height: 16px; }
.handle { position: absolute; left: -1px; top: 50%; width: 4px; height: 50px; margin-top: -25px; background: #8e8e8e; }
.handle::after { content: ""; position: absolute; left: 0; top: 23px; border: 2px solid transparent; border-left: 3px solid #fff; border-right: 0; }

.status { display: flex; align-items: center; height: 17px; border-top: 1px solid #d5d2cf; font-size: 8px; flex: none; }
.status > span { display: flex; align-items: center; height: 12px; white-space: nowrap; border-right: 1px solid #e0dedc; }
.status .st-save { flex: 0 0 22px; padding-left: 5px; border: 0; }
.st-save svg { width: 14px; height: 14px; }
.st-sheet { flex: 152 1 0; padding-left: 5px; }
.st-sel { flex: 213 1 0; padding-left: 6px; }
.st-page { flex: 194 1 0; padding-left: 5px; }
.st-lang { flex: 169 1 0; justify-content: center; }
.st-ins { flex: 0 0 46px; }
.st-mode { flex: 0 0 29px; padding-left: 5px; }
.st-mode svg { width: 20px; height: 12px; }
.st-a { flex: 0 0 20px; }
.st-avg { flex: 183 1 0; justify-content: center; }
.st-zoom { flex: 0 0 96px; justify-content: center; gap: 3px; }
.status .st-pct { flex: 0 0 33px; justify-content: center; border: 0; }
.st-zoom input { appearance: none; width: 65px; height: 8px; background: linear-gradient(#999, #999) center / 100% 1px no-repeat; }
.st-zoom input::-webkit-slider-thumb { appearance: none; width: 3px; height: 7px; border: 1px solid #555; background: #f6f5f4; }
```
